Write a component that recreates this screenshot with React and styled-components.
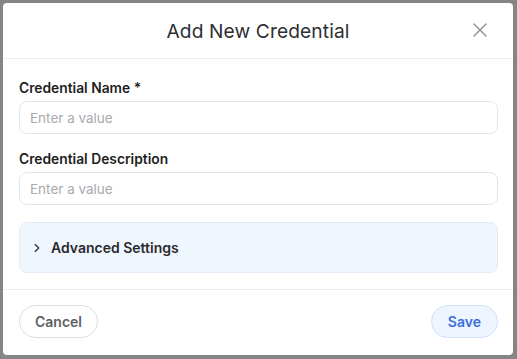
import React from 'react'
import styled, { createGlobalStyle } from 'styled-components'
import { X, ChevronRight } from 'lucide-react'

const Global = createGlobalStyle`
  html, body {
    margin: 0;
    padding: 0;
    background: #858585;
    font-family: Inter, "Noto Sans", sans-serif;
  }
  * { box-sizing: border-box; }
`

const Page = styled.div`
  width: 517px;
  height: 359px;
  padding: 3px 4px 4px 3px;
`

const Modal = styled.div`
  width: 510px;
  height: 352px;
  background: #fff;
  border-radius: 4px;
  display: flex;
  flex-direction: column;
  overflow: hidden;
`

const Header = styled.div`
  height: 56px;
  flex: none;
  display: flex;
  align-items: center;
  justify-content: center;
  position: relative;
  border-bottom: 1px solid #ececef;

  h2 {
    margin: 0;
    font-size: 19.2px;
    font-weight: 400;
    color: #2f2f33;
    letter-spacing: 0.1px;
  }
`

const Close = styled.button`
  position: absolute;
  right: 21px;
  top: 15px;
  border: none;
  background: none;
  padding: 0;
  display: flex;
  color: #8a8a8f;
`

const Body = styled.div`
  padding: 21px 15px 16px 16px;
  display: flex;
  flex-direction: column;
`

const Field = styled.div`
  display: flex;
  flex-direction: column;
  margin-bottom: 17px;
`

const Label = styled.label`
  font-size: 13.8px;
  line-height: 16px;
  font-weight: 600;
  color: #1f1f22;
  margin-bottom: 5px;
`

const Input = styled.input`
  height: 33px;
  border: 1px solid #e1e4ea;
  border-radius: 8px;
  padding: 0 10px;
  font-family: inherit;
  font-size: 13.5px;
  color: #333;
  outline: none;

  &::placeholder {
    color: #a9a9ae;
  }
`

const Advanced = styled.div`
  height: 51px;
  background: #eff6fe;
  border: 1px solid #e3ebf5;
  border-radius: 8px;
  display: flex;
  align-items: center;
  padding-left: 10px;
  gap: 7px;
  color: #2a2a2e;

  span {
    font-size: 14px;
    font-weight: 600;
  }
`

const Footer = styled.div`
  flex: 1;
  border-top: 1px solid #ececef;
  display: flex;
  align-items: center;
  justify-content: space-between;
  padding: 0 15px 2px 16px;
`

const Button = styled.button`
  height: 33px;
  padding: 0 ${p => (p.$primary ? 16 : 15)}px;
  border-radius: 17px;
  font-family: inherit;
  font-size: 14px;
  font-weight: 600;
  border: 1px solid ${p => (p.$primary ? '#cfe1fb' : '#dedede')};
  background: ${p => (p.$primary ? '#eef5ff' : '#fff')};
  color: ${p => (p.$primary ? '#3a6fd8' : '#5f5f66')};
`

export default function App() {
  return (
    <>
      <Global />
      <Page>
        <Modal>
          <Header>
            <h2>Add New Credential</h2>
            <Close aria-label="close">
              <X size={24} strokeWidth={1.3} />
            </Close>
          </Header>
          <Body>
            <Field>
              <Label>Credential Name *</Label>
              <Input placeholder="Enter a value" />
            </Field>
            <Field>
              <Label>Credential Description</Label>
              <Input placeholder="Enter a value" />
            </Field>
            <Advanced>
              <ChevronRight size={14} strokeWidth={2} />
              <span>Advanced Settings</span>
            </Advanced>
          </Body>
          <Footer>
            <Button>Cancel</Button>
            <Button $primary>Save</Button>
          </Footer>
        </Modal>
      </Page>
    </>
  )
}
